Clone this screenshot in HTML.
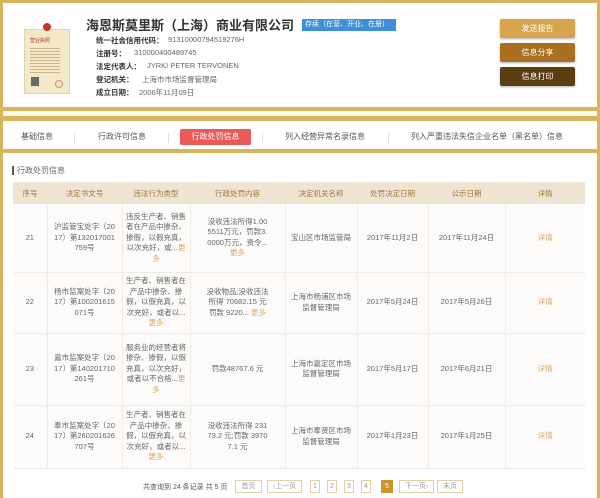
<!DOCTYPE html>
<html><head><meta charset="utf-8"><style>
*{margin:0;padding:0;box-sizing:border-box}
body{width:600px;height:498px;background:#fff;position:relative;overflow:hidden;font-family:"Liberation Sans","Noto Sans CJK SC",sans-serif;color:#555}
.a{position:absolute;white-space:nowrap}
.gold{background:#d8b45c}
.lbl{font-size:7.5px;color:#333;font-weight:bold}
.val{font-size:7.5px;color:#666}
.btn{position:absolute;left:500px;width:75px;height:19px;color:#fff;font-size:8px;text-align:center;line-height:19px;border-radius:2px;box-shadow:0 1px 2px rgba(0,0,0,.3)}
.tab{position:absolute;top:130px;font-size:8px;color:#555;line-height:14px}
.sep{position:absolute;top:133px;width:1px;height:10px;background:#ddd}
table{position:absolute;left:13px;top:182px;width:572px;border-collapse:collapse;font-size:7.5px;color:#666;text-align:center}
th{background:#efe4d2;color:#a07840;font-weight:normal;height:22px}
td{border-right:1px solid #f0ebe3;border-bottom:1px solid #f0ebe3;line-height:10.5px;background:#fcfbf9}
td:last-child{border-right:none}
.more{color:#e0a860}
.pg{position:absolute;top:480px;height:13px;border:1px solid #e0cfa8;font-size:7px;line-height:11px;text-align:center;color:#999}
</style></head><body>
<div class="a gold" style="left:0;top:0;width:600px;height:3px"></div>
<div class="a gold" style="left:0;top:0;width:3px;height:498px"></div>
<div class="a gold" style="left:597px;top:0;width:3px;height:498px"></div>
<div class="a gold" style="left:0;top:107px;width:600px;height:4px"></div>
<div class="a gold" style="left:0;top:116px;width:600px;height:5px"></div>
<div class="a gold" style="left:0;top:149px;width:600px;height:4px"></div>
<div class="a" style="left:3px;top:111px;width:594px;height:5px;background:#fdf8ee"></div>
<div class="a" style="left:24px;top:29px;width:46px;height:65px;background:#f3e8c8;border:1px solid #e3d4a8"></div>
<div class="a" style="left:43px;top:23px;width:8px;height:8px;border-radius:50%;background:#c0392b"></div>
<div class="a" style="left:30px;top:37px;font-size:5px;color:#a33">营业执照</div>
<div class="a" style="left:30px;top:46px;width:30px;height:28px;background:repeating-linear-gradient(#f3e8c8 0 2px,#b8a070 2px 3px);opacity:.7"></div>
<div class="a" style="left:31px;top:77px;width:8px;height:9px;background:#6a6a6a"></div>
<div class="a" style="left:55px;top:80px;width:8px;height:8px;border-radius:50%;border:1px solid #d88"></div>
<div class="a" style="left:86px;top:15px;font-size:13px;font-weight:bold;color:#333">海恩斯莫里斯（上海）商业有限公司</div>
<div class="a" style="left:302px;top:19px;width:94px;height:12px;background:#3d8fd8;color:#fff;font-size:7px;line-height:12px;padding-left:3px">存续（在营、开业、在册）</div>
<div class="a lbl" style="left:96px;top:35px">统一社会信用代码：</div><div class="a val" style="left:168px;top:35px">91310000794519276H</div>
<div class="a lbl" style="left:96px;top:48px">注册号：</div><div class="a val" style="left:134px;top:48px">310000400489745</div>
<div class="a lbl" style="left:96px;top:61px">法定代表人：</div><div class="a val" style="left:147px;top:61px">JYRKI PETER TERVONEN</div>
<div class="a lbl" style="left:96px;top:74px">登记机关：</div><div class="a val" style="left:142px;top:74px">上海市市场监督管理局</div>
<div class="a lbl" style="left:96px;top:87px">成立日期：</div><div class="a val" style="left:139px;top:87px">2006年11月09日</div>
<div class="btn" style="top:19px;background:#d6a54e">发送报告</div>
<div class="btn" style="top:43px;background:#a8701f">信息分享</div>
<div class="btn" style="top:67px;background:#5b3d12">信息打印</div>
<div class="tab" style="left:21px">基础信息</div>
<div class="sep" style="left:74px"></div>
<div class="tab" style="left:98px">行政许可信息</div>
<div class="sep" style="left:168px"></div>
<div class="a" style="left:180px;top:129px;width:71px;height:16px;background:#e85a5a;color:#fff;font-size:8px;text-align:center;line-height:16px;border-radius:2px">行政处罚信息</div>
<div class="sep" style="left:262px"></div>
<div class="tab" style="left:285px">列入经营异常名录信息</div>
<div class="sep" style="left:388px"></div>
<div class="tab" style="left:411px">列入严重违法失信企业名单（黑名单）信息</div>
<div class="a" style="left:12px;top:166px;width:2px;height:9px;background:#555"></div>
<div class="a" style="left:17px;top:165px;font-size:8px;color:#666">行政处罚信息</div>
<table>
<tr><th style="width:34px">序号</th><th style="width:75px">决定书文号</th><th style="width:68px">违法行为类型</th><th style="width:95px">行政处罚内容</th><th style="width:72px">决定机关名称</th><th style="width:71px">处罚决定日期</th><th style="width:77px">公示日期</th><th>详情</th></tr>
<tr style="height:68px"><td>21</td><td>沪监管宝处字（20<br>17）第132017001<br>759号</td><td>违反生产者、销售<br>者在产品中掺杂、<br>掺假，以假充真，<br>以次充好，或...<span class="more">更</span><br><span class="more">多</span></td><td>没收违法所得1.00<br>5511万元，罚款3.<br>0000万元，责令...<br><span class="more">更多</span></td><td>宝山区市场监管局</td><td>2017年11月2日</td><td>2017年11月24日</td><td class="more">详情</td></tr>
<tr style="height:61px"><td>22</td><td>杨市监案处字〔20<br>17〕第100201615<br>071号</td><td>生产者、销售者在<br>产品中掺杂、掺<br>假，以假充真，以<br>次充好，或者以...<br><span class="more">更多</span></td><td>没收物品;没收违法<br>所得 70682.15 元<br>罚款 9220... <span class="more">更多</span></td><td>上海市杨浦区市场<br>监督管理局</td><td>2017年5月24日</td><td>2017年5月26日</td><td class="more">详情</td></tr>
<tr style="height:72px"><td>23</td><td>嘉市监案处字〔20<br>17〕第140201710<br>261号</td><td>服务业的经营者将<br>掺杂、掺假，以假<br>充真，以次充好，<br>或者以不合格...<span class="more">更</span><br><span class="more">多</span></td><td>罚款48767.6 元</td><td>上海市嘉定区市场<br>监督管理局</td><td>2017年5月17日</td><td>2017年6月21日</td><td class="more">详情</td></tr>
<tr style="height:63px"><td>24</td><td>奉市监案处字〔20<br>17〕第260201626<br>707号</td><td>生产者、销售者在<br>产品中掺杂、掺<br>假，以假充真，以<br>次充好，或者以...<br><span class="more">更多</span></td><td>没收违法所得 231<br>73.2 元;罚款 3970<br>7.1 元</td><td>上海市奉贤区市场<br>监督管理局</td><td>2017年1月23日</td><td>2017年1月25日</td><td class="more">详情</td></tr>
</table>
<div class="a" style="left:143px;top:482px;font-size:7px;color:#555">共查询到 24 条记录 共 5 页</div>
<div class="pg" style="left:235px;width:27px">首页</div>
<div class="pg" style="left:267px;width:35px">‹上一页</div>
<div class="pg" style="left:310px;width:10px">1</div>
<div class="pg" style="left:327px;width:10px">2</div>
<div class="pg" style="left:344px;width:10px">3</div>
<div class="pg" style="left:361px;width:10px">4</div>
<div class="pg" style="left:381px;width:12px;background:#c9962e;border-color:#c9962e;color:#fff">5</div>
<div class="pg" style="left:399px;width:35px">下一页›</div>
<div class="pg" style="left:437px;width:26px">末页</div>
</body></html>
